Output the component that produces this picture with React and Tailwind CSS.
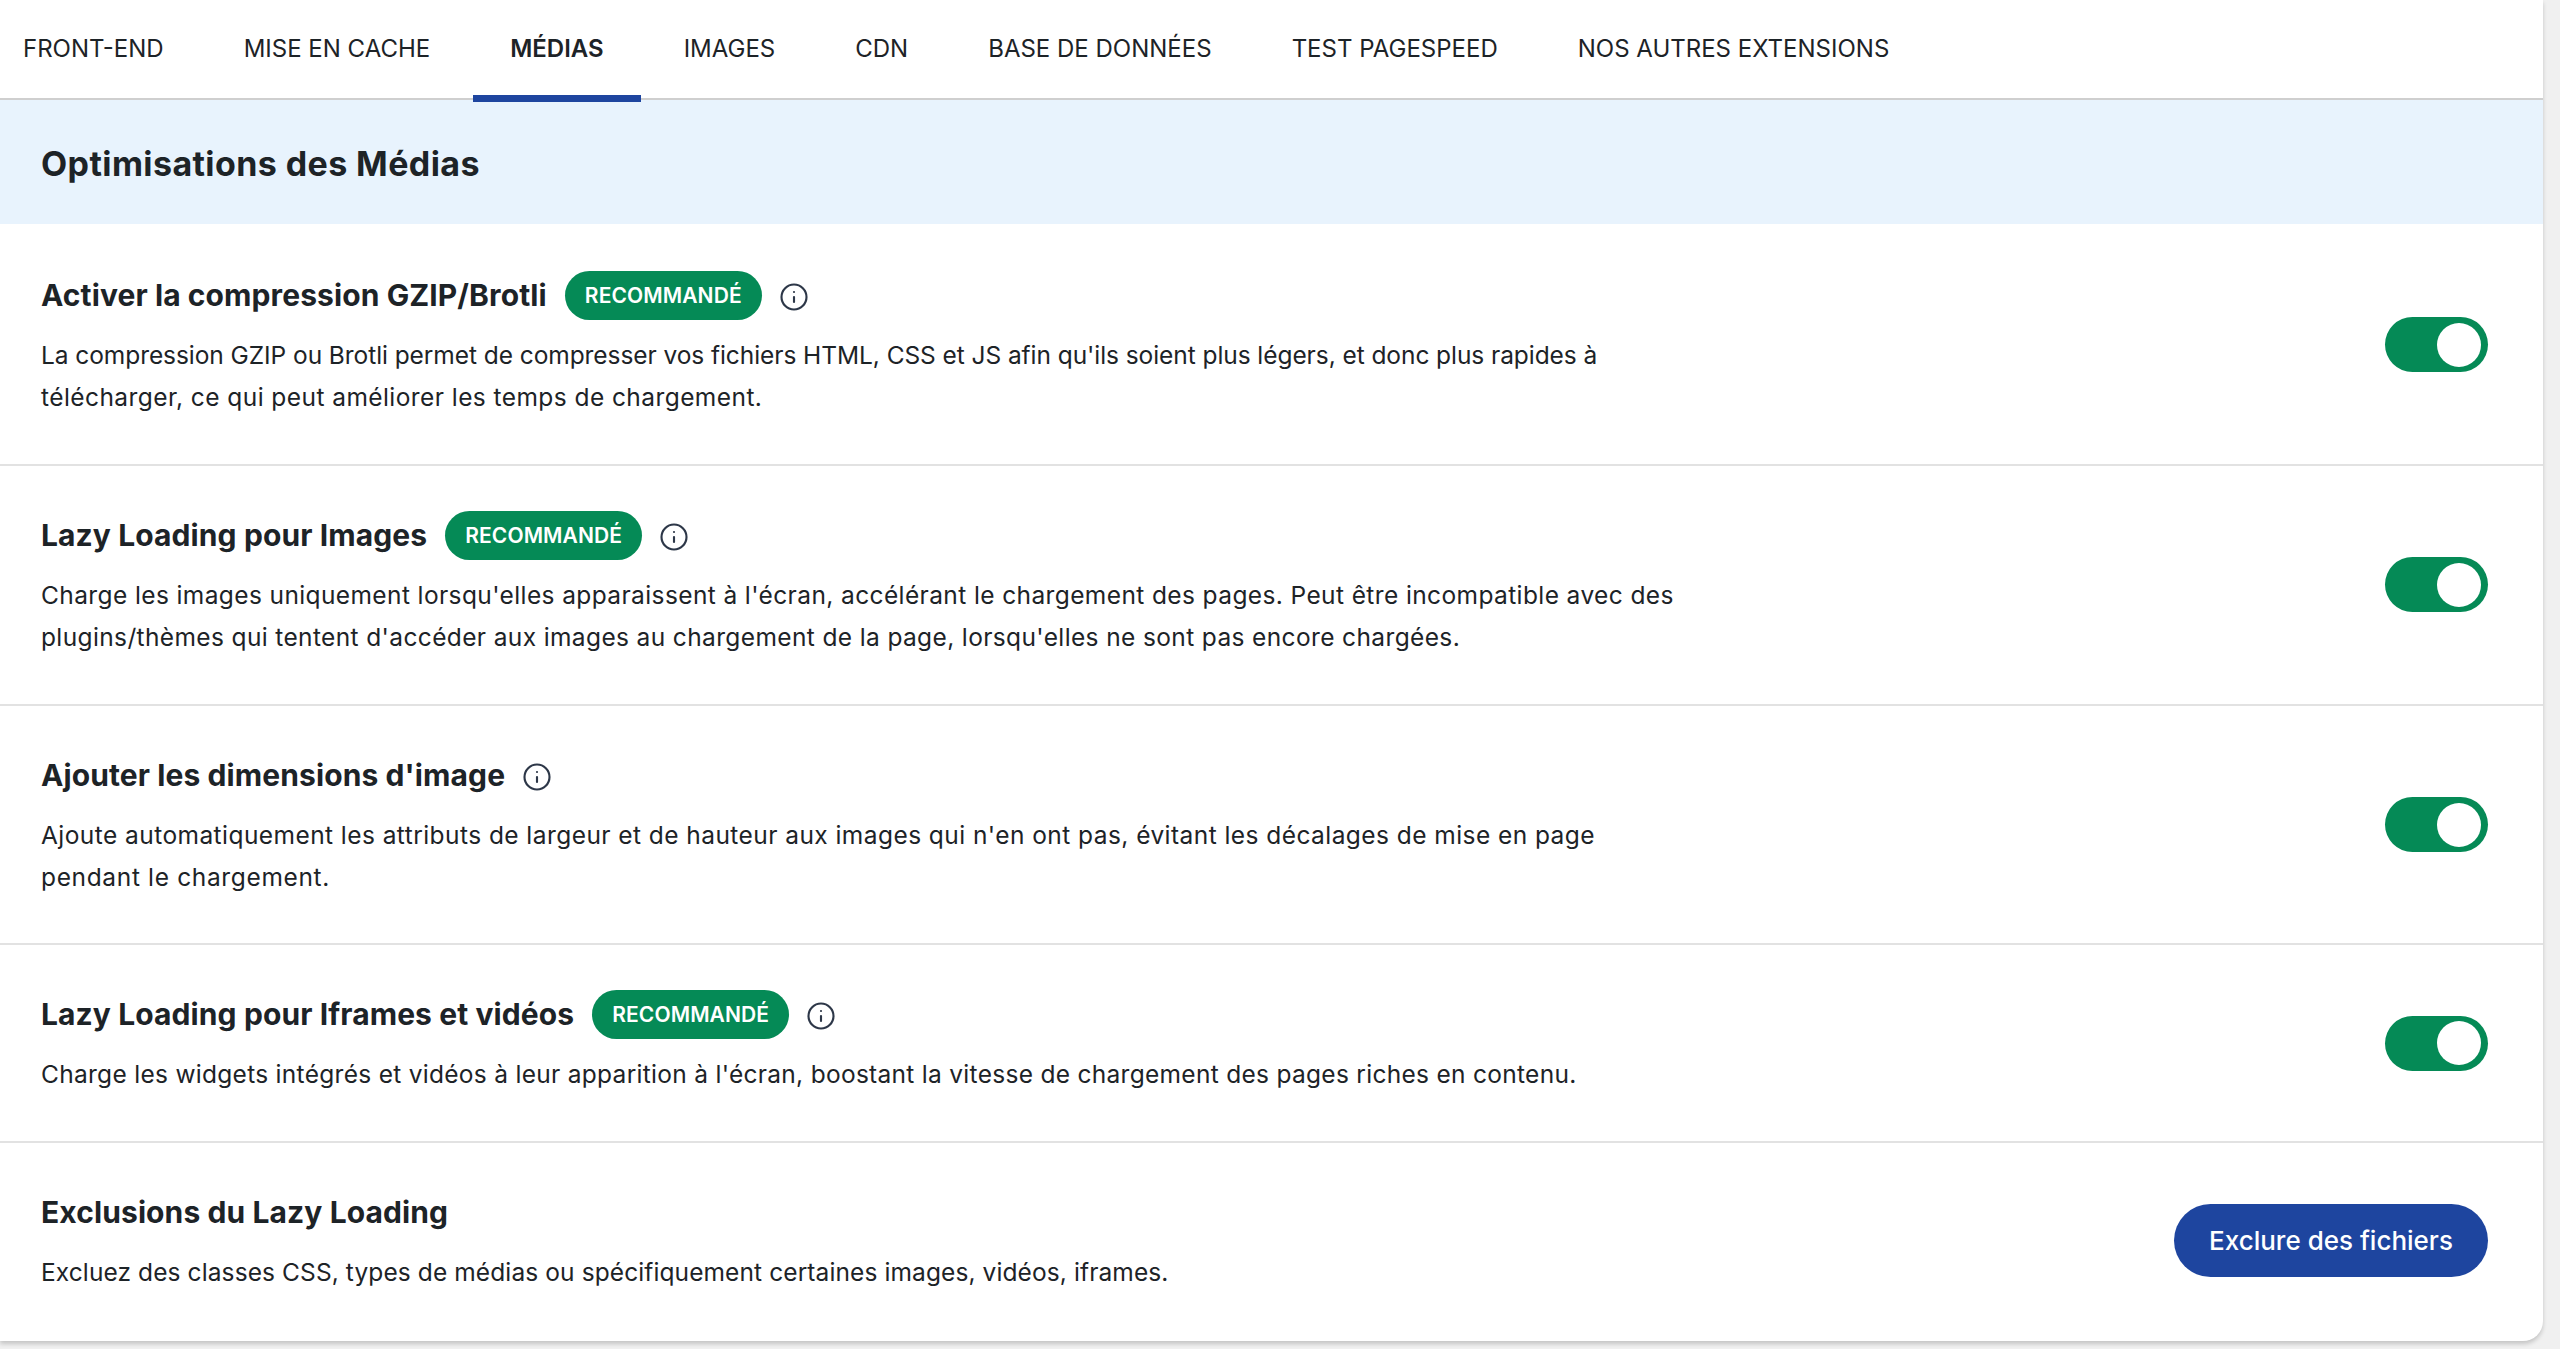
import { Info } from 'lucide-react'

const tabs = [
  'FRONT-END',
  'MISE EN CACHE',
  'MÉDIAS',
  'IMAGES',
  'CDN',
  'BASE DE DONNÉES',
  'TEST PAGESPEED',
  'NOS AUTRES EXTENSIONS',
]

// tracking is set per line so the line ends land where they do in the design
const rows = [
  {
    title: 'Activer la compression GZIP/Brotli',
    badge: true,
    lines: [
      ["La compression GZIP ou Brotli permet de compresser vos fichiers HTML, CSS et JS afin qu'ils soient plus légers, et donc plus rapides à", 'tracking-[-0.07px]'],
      ['télécharger, ce qui peut améliorer les temps de chargement.', 'tracking-[0.43px]'],
    ],
  },
  {
    title: 'Lazy Loading pour Images',
    badge: true,
    lines: [
      ["Charge les images uniquement lorsqu'elles apparaissent à l'écran, accélérant le chargement des pages. Peut être incompatible avec des", 'tracking-[0.39px]'],
      ["plugins/thèmes qui tentent d'accéder aux images au chargement de la page, lorsqu'elles ne sont pas encore chargées.", 'tracking-[0.37px]'],
    ],
  },
  {
    title: "Ajouter les dimensions d'image",
    lines: [
      ["Ajoute automatiquement les attributs de largeur et de hauteur aux images qui n'en ont pas, évitant les décalages de mise en page", 'tracking-[0.44px]'],
      ['pendant le chargement.', 'tracking-[0.65px]'],
    ],
  },
  {
    title: 'Lazy Loading pour Iframes et vidéos',
    badge: true,
    lines: [
      ["Charge les widgets intégrés et vidéos à leur apparition à l'écran, boostant la vitesse de chargement des pages riches en contenu.", 'tracking-[0.29px]'],
    ],
  },
]

const Toggle = () => (
  <div className="flex h-[55px] w-[103px] shrink-0 items-center justify-end rounded-full bg-[#058a56] pr-[7px]">
    <div className="h-[44px] w-[44px] rounded-full bg-white" />
  </div>
)

const Lines = ({ lines }) => (
  <p className="mt-[14px] text-[24.5px] leading-[42.4px]">
    {lines.map(([text, tracking]) => (
      <span key={text} className={`block whitespace-nowrap ${tracking}`}>
        {text}
      </span>
    ))}
  </p>
)

const Row = ({ title, badge, lines }) => (
  <div className="flex items-center justify-between border-b-2 border-[#e2e2e2] pl-[41px] pr-[55px] py-[45px]">
    <div>
      <div className="flex h-[49px] items-center">
        <h3 className="text-[30px] font-bold tracking-[0.1px]">{title}</h3>
        {badge && (
          <span className="ml-[18px] flex h-[49px] w-[197px] items-center justify-center rounded-full bg-[#058a56] text-[21px] font-semibold tracking-[0.1px] text-white">
            RECOMMANDÉ
          </span>
        )}
        <Info className="ml-[17px] mt-[3px] h-[30px] w-[30px] text-[#2d3748]" strokeWidth={1.7} />
      </div>
      <Lines lines={lines} />
    </div>
    <Toggle />
  </div>
)

export default function App() {
  return (
    <div className="min-h-[1349px] bg-[#f0f0f0] font-['Inter',sans-serif] text-[#1d2327]">
      <div className="w-[2543px] rounded-br-[20px] bg-white shadow-[0_3px_4px_rgba(0,0,0,0.18)]">
        <nav className="flex h-[100px] items-stretch rounded-tr-[16px] border-b-2 border-[#cfcfcf] pl-[23px] text-[24px]">
          {tabs.map((tab, i) => (
            <a
              key={tab}
              className={
                tab === 'MÉDIAS'
                  ? 'relative mx-[3px] flex items-center px-[37px] font-semibold'
                  : i === 0
                    ? 'mr-[40px] flex items-center'
                    : 'flex items-center px-[40px]'
              }
            >
              {tab}
              {tab === 'MÉDIAS' && <span className="absolute inset-x-0 bottom-[-4px] h-[7px] bg-[#1e459f]" />}
            </a>
          ))}
        </nav>

        <div className="flex h-[124px] items-center bg-[#e8f3fd] pl-[41px] pt-[2px]">
          <h2 className="text-[34px] font-bold tracking-[0.4px]">Optimisations des Médias</h2>
        </div>

        <div className="pt-[2px]">
          {rows.map((row) => (
            <Row key={row.title} {...row} />
          ))}
        </div>

        <div className="flex items-center justify-between pl-[41px] pr-[55px] pt-[45px] pb-[48px]">
          <div>
            <h3 className="flex h-[49px] items-center text-[30px] font-bold tracking-[0.1px]">Exclusions du Lazy Loading</h3>
            <Lines lines={[['Excluez des classes CSS, types de médias ou spécifiquement certaines images, vidéos, iframes.', 'tracking-[0.1px]']]} />
          </div>
          <button className="flex h-[73px] w-[314px] items-center justify-center rounded-full bg-[#1e459f] text-[26px] font-medium text-white">
            Exclure des fichiers
          </button>
        </div>
      </div>
    </div>
  )
}
